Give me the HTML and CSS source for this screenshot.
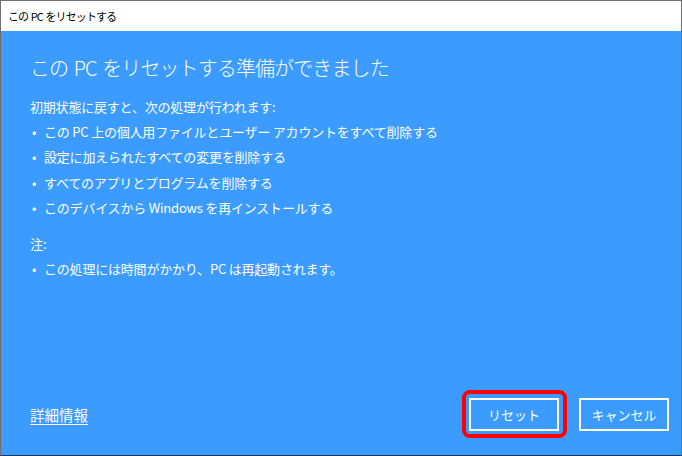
FILE: index.html
```html
<!DOCTYPE html>
<html lang="ja">
<head>
<meta charset="utf-8">
<title>この PC をリセットする</title>
<link rel="stylesheet" href="styles.css">
</head>
<body>
<div class="window">
  <div class="titlebar">この PC をリセットする</div>
  <div class="content">
    <h1 class="heading">この PC をリセットする準備ができました</h1>
    <p class="intro">初期状態に戻すと、次の処理が行われます:</p>
    <ul class="list">
      <li><span class="dot">•</span>この PC 上の個人用ファイルとユーザー アカウントをすべて削除する</li>
      <li><span class="dot">•</span>設定に加えられたすべての変更を削除する</li>
      <li><span class="dot">•</span>すべてのアプリとプログラムを削除する</li>
      <li><span class="dot">•</span>このデバイスから Windows を再インストールする</li>
    </ul>
    <p class="note">注:</p>
    <ul class="list">
      <li><span class="dot">•</span>この処理には時間がかかり、PC は再起動されます。</li>
    </ul>
    <div class="footer">
      <a class="more" href="#">詳細情報</a>
      <div class="buttons">
        <div class="highlight"><button class="btn">リセット</button></div>
        <button class="btn">キャンセル</button>
      </div>
    </div>
  </div>
</div>
</body>
</html>
```
FILE: styles.css
```css
* { box-sizing: border-box; }
html, body { margin: 0; padding: 0; }
body {
  width: 682px;
  height: 456px;
  overflow: hidden;
  background: #3b9bff;
  font-family: "Noto Sans CJK JP", "Noto Sans", sans-serif;
}
.window {
  width: 682px;
  height: 456px;
  border: 1px solid #6f6f6f;
  border-bottom: 1px solid #2a3550;
  display: flex;
  flex-direction: column;
  background: #3b9bff;
}
.titlebar {
  height: 30px;
  flex: none;
  background: #ffffff;
  color: #000;
  font-size: 11px;
  letter-spacing: -0.9px;
  word-spacing: 1px;
  line-height: 30px;
  padding-left: 7px;
}
.content {
  flex: 1;
  display: flex;
  flex-direction: column;
  padding: 23px 12px 24px 29px;
  color: #ffffff;
}
.heading {
  margin: 0;
  font-size: 20px;
  font-weight: 300;
  line-height: 28px;
  letter-spacing: -0.9px;
  word-spacing: 2px;
}
.intro {
  margin: 12px 0 0;
  font-size: 13px;
  line-height: 25px;
  letter-spacing: -0.2px;
}
.list {
  list-style: none;
  margin: 0;
  padding: 0;
  font-size: 13px;
  line-height: 25.3px;
  letter-spacing: -0.2px;
}
.list li { display: flex; }
.dot { width: 14px; flex: none; padding-left: 2px; }
.note {
  margin: 11px 0 0;
  font-size: 13px;
  line-height: 25px;
}
.footer {
  margin-top: auto;
  display: flex;
  align-items: center;
  justify-content: space-between;
}
.more {
  color: #ffffff;
  font-size: 14.5px;
  text-decoration: underline;
  text-underline-offset: 3px;
}
.buttons { display: flex; gap: 20px; }
.highlight { position: relative; }
.highlight::after {
  content: "";
  position: absolute;
  left: -7px; right: -8px; top: -8px; bottom: -7px;
  border: 4px solid #ff0000;
  border-radius: 8px;
}
.btn {
  width: 90px;
  height: 33px;
  border: 2px solid #ffffff;
  background: #3b9bff;
  color: #ffffff;
  font-family: "Noto Sans CJK JP", sans-serif;
  font-size: 13px;
  padding: 0;
}
```
